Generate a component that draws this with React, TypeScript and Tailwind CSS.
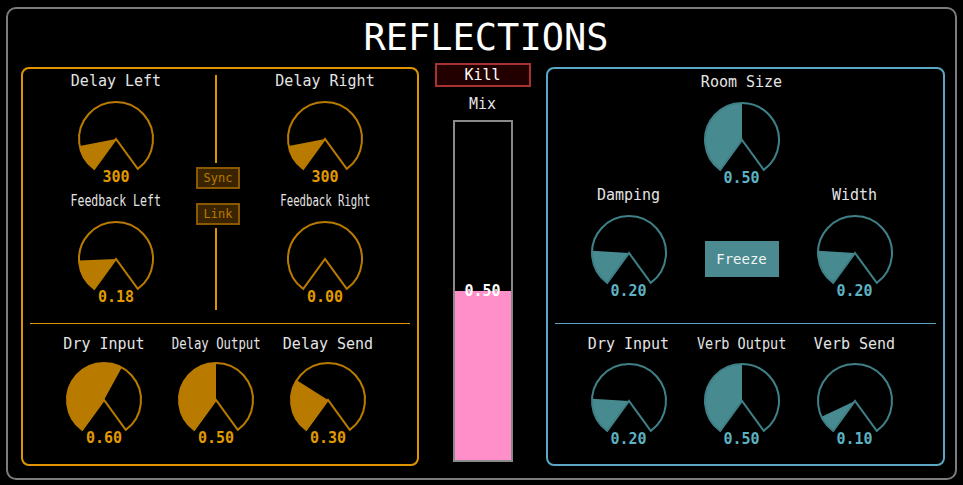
import React from 'react';

const START = -144;
const SWEEP = 288;

const pt = (deg: number, r = 37) => {
  const a = (deg * Math.PI) / 180;
  return `${(40 + r * Math.sin(a)).toFixed(2)} ${(40 - r * Math.cos(a)).toFixed(2)}`;
};

type Theme = 'orange' | 'teal';

const colors = {
  orange: { stroke: '#b97a00', fill: '#b97a00' },
  teal: { stroke: '#3f8087', fill: '#478a90' },
};

function Knob({
  label,
  value,
  frac,
  theme,
  scale = '',
  gap = 'mt-[8px]',
}: {
  label: string;
  value: string;
  frac: number;
  theme: Theme;
  scale?: string;
  gap?: string;
}) {
  const c = colors[theme];
  const end = START + SWEEP * frac;
  const large = end - START > 180 ? 1 : 0;
  const outline = `M ${pt(START)} A 37 37 0 1 1 ${pt(START + SWEEP)} L 40 40 Z`;
  const fill = `M 40 40 L ${pt(START)} A 37 37 0 ${large} 1 ${pt(end)} Z`;

  return (
    <div className="flex flex-col items-center">
      <div className="h-[20px] leading-[20px] text-[15px] text-[#e4e4e4] whitespace-nowrap flex justify-center w-full">
        <span className={`inline-block ${scale}`}>{label}</span>
      </div>
      <div className={`relative w-[80px] h-[80px] ${gap}`}>
        <svg width="80" height="80" viewBox="0 0 80 80">
          {frac > 0 && <path d={fill} fill={c.fill} />}
          <path d={outline} fill="none" stroke={c.stroke} strokeWidth="2" strokeLinejoin="miter" />
        </svg>
        <div
          className={`absolute left-0 right-0 top-[69px] h-[18px] leading-[18px] text-center text-[15px] font-bold ${
            theme === 'orange' ? 'text-[#e09a00]' : 'text-[#5cb2c2]'
          }`}
        >
          {value}
        </div>
      </div>
    </div>
  );
}

function SmallButton({ text, className = '' }: { text: string; className?: string }) {
  return (
    <div
      className={`w-[44px] h-[22px] shrink-0 border-2 border-[#8a5800] bg-[#3a2400] text-[#b87a00] text-[12px] leading-[18px] text-center ${className}`}
    >
      {text}
    </div>
  );
}

export default function App() {
  return (
    <div className="w-[963px] h-[485px] bg-black overflow-hidden font-['DejaVu_Sans_Mono',monospace] pt-[7px] pl-[6px]">
      <div className="w-[951px] h-[473px] border-2 border-[#7c7c7c] rounded-[10px] bg-black flex flex-col">
        <div className="pt-[10px] pl-[9px] h-[47px] text-center text-[37px] leading-[37px] text-white">REFLECTIONS</div>

        <div className="flex mt-[7px] pl-[13px]">
          {/* Delay panel */}
          <div className="mt-[4px] w-[398px] h-[399px] border-2 border-[#e09400] rounded-[8px] flex flex-col">
            <div className="h-[254px] flex">
              <div className="w-[186px] flex flex-col items-center pt-[2px] gap-[12px]">
                <Knob label="Delay Left" value="300" frac={0.15} theme="orange" />
                <Knob label="Feedback Left" value="0.18" frac={0.18} theme="orange" scale="scale-x-[0.77]" />
              </div>
              <div className="w-[18px] flex flex-col items-center pt-[6px]">
                <div className="w-[2px] h-[88px] bg-[#e09400] ml-[-4px]" />
                <SmallButton text="Sync" className="mt-[4px]" />
                <SmallButton text="Link" className="mt-[14px]" />
                <div className="w-[2px] h-[82px] bg-[#e09400] mt-[3px] ml-[-4px]" />
              </div>
              <div className="w-[190px] flex flex-col items-center pt-[2px] pl-[6px] gap-[12px]">
                <Knob label="Delay Right" value="300" frac={0.15} theme="orange" />
                <Knob label="Feedback Right" value="0.00" frac={0} theme="orange" scale="scale-x-[0.71]" />
              </div>
            </div>
            <div className="h-[1px] bg-[#e09400] mx-[7px]" />
            <div className="flex pl-[25px] pt-[10px]">
              <div className="w-[112px]">
                <Knob label="Dry Input" value="0.60" frac={0.6} theme="orange" gap="mt-[6px]" />
              </div>
              <div className="w-[112px]">
                <Knob label="Delay Output" value="0.50" frac={0.5} theme="orange" gap="mt-[6px]" scale="scale-x-[0.82]" />
              </div>
              <div className="w-[112px]">
                <Knob label="Delay Send" value="0.30" frac={0.3} theme="orange" gap="mt-[6px]" />
              </div>
            </div>
          </div>

          {/* Mix column */}
          <div className="w-[127px] flex flex-col items-center">
            <div className="w-[96px] h-[24px] border-2 border-[#a83232] bg-[#220000] text-white text-[15px] leading-[20px] text-center">
              Kill
            </div>
            <div className="mt-[8px] h-[18px] leading-[18px] text-[15px] text-[#e4e4e4]">Mix</div>
            <div className="mt-[7px] relative w-[60px] h-[342px] border-2 border-[#8a8a8a] flex flex-col justify-end">
              <div className="h-[50%] bg-[#ff8fc8]" />
              <div className="absolute left-0 right-0 top-[160px] h-[18px] leading-[18px] text-center text-[15px] font-bold text-white">
                0.50
              </div>
            </div>
          </div>

          {/* Reverb panel */}
          <div className="mt-[4px] w-[399px] h-[399px] border-2 border-[#5aa6c4] rounded-[8px] flex flex-col">
            <div className="h-[254px] flex flex-col pl-[24px] pt-[3px]">
              <div className="flex">
                <div className="w-[113px]" />
                <div className="w-[113px]">
                  <Knob label="Room Size" value="0.50" frac={0.5} theme="teal" />
                </div>
              </div>
              <div className="flex mt-[5px] items-start">
                <div className="w-[113px]">
                  <Knob label="Damping" value="0.20" frac={0.2} theme="teal" />
                </div>
                <div className="w-[113px] flex justify-center">
                  <div className="mt-[56px] w-[74px] h-[36px] bg-[#4a8a90] text-[#eef4f4] text-[14px] leading-[36px] text-center">
                    Freeze
                  </div>
                </div>
                <div className="w-[113px]">
                  <Knob label="Width" value="0.20" frac={0.2} theme="teal" />
                </div>
              </div>
            </div>
            <div className="h-[1px] bg-[#5aa6c4] mx-[7px]" />
            <div className="flex pl-[24px] pt-[10px]">
              <div className="w-[113px]">
                <Knob label="Dry Input" value="0.20" frac={0.2} theme="teal" gap="mt-[7px]" />
              </div>
              <div className="w-[113px]">
                <Knob label="Verb Output" value="0.50" frac={0.5} theme="teal" gap="mt-[7px]" scale="scale-x-[0.9]" />
              </div>
              <div className="w-[113px]">
                <Knob label="Verb Send" value="0.10" frac={0.1} theme="teal" gap="mt-[7px]" />
              </div>
            </div>
          </div>
        </div>
      </div>
    </div>
  );
}
